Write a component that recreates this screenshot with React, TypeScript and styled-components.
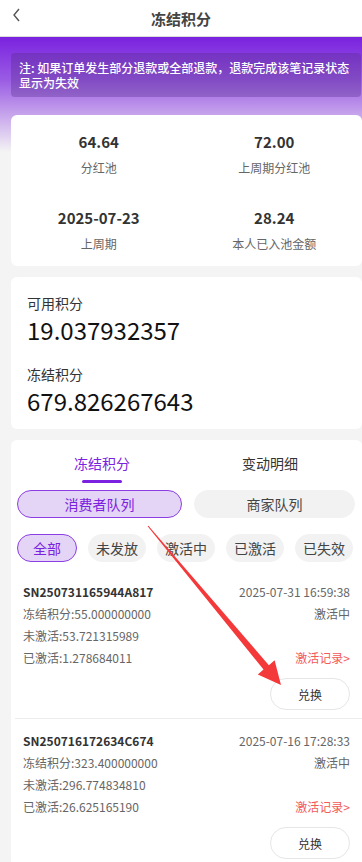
import React, { useState } from 'react'
import styled, { createGlobalStyle } from 'styled-components'

const GlobalStyle = createGlobalStyle`
  html, body {
    margin: 0;
    padding: 0;
    background: #f4f4f4;
    font-family: "Noto Sans CJK SC", "Noto Sans", sans-serif;
    -webkit-font-smoothing: antialiased;
  }
  * { box-sizing: border-box; }
`

const Page = styled.div`
  position: relative;
  width: 362px;
  min-height: 862px;
  overflow: hidden;
  background: linear-gradient(180deg, #7a22df 37px, #9a5ce4 80px, #c6a3ec 114px, #f4f4f4 152px) no-repeat,
    #f4f4f4;
`

const Header = styled.div`
  height: 37px;
  display: flex;
  align-items: center;
  justify-content: center;
  background: #fff;
  border-bottom: 1px solid #dcdcdc;
  position: relative;
`

const BackBtn = styled.div`
  position: absolute;
  left: 12px;
  top: 7px;
  width: 16px;
  height: 16px;
  display: flex;
  align-items: center;
`

const Title = styled.div`
  font-size: 15px;
  font-weight: 700;
  color: #444;
`

const Top = styled.div`
  padding: 16px 1px 0 11px;
`

const Notice = styled.div`
  background: rgba(80, 40, 130, 0.32);
  border-radius: 4px;
  padding: 7px 11px 7px 8px;
  color: #fff;
  font-size: 12px;
  line-height: 15px;
  font-weight: 500;
`

const Stack = styled.div`
  display: flex;
  flex-direction: column;
  gap: 11px;
  padding: 18px 0 0 11px;
`

const Card = styled.div`
  background: #fff;
  border-radius: 6px;
  width: 351px;
`

const StatsGrid = styled(Card)`
  display: grid;
  grid-template-columns: 1fr 1fr;
  row-gap: 30px;
  padding: 17px 0 12px;
`

const Stat = styled.div`
  display: flex;
  flex-direction: column;
  align-items: center;
  gap: 6px;
`

const StatValue = styled.div`
  font-size: 15px;
  line-height: 20px;
  font-weight: 700;
  color: #333;
`

const StatLabel = styled.div`
  font-size: 12px;
  line-height: 20px;
  color: #666;
`

const Balance = styled(Card)`
  padding: 16px 16px 12px;
`

const BalLabel = styled.div<{ $first?: boolean }>`
  font-size: 14px;
  line-height: 20px;
  color: #333;
  margin-top: ${({ $first }) => ($first ? '0' : '18px')};
`

const BalValue = styled.div`
  font-size: 24px;
  line-height: 32px;
  color: #111;
  margin-top: 1px;
`

const ListCard = styled(Card)`
  padding: 8px 0 0;
`

const Tabs = styled.div`
  display: grid;
  grid-template-columns: 1fr 1fr;
  height: 42px;
  padding: 0 8px 0 7px;
`

const Tab = styled.div<{ $active?: boolean }>`
  position: relative;
  text-align: center;
  font-size: 14px;
  line-height: 30px;
  color: ${({ $active }) => ($active ? '#7a22df' : '#333')};
  &::after {
    content: '';
    display: ${({ $active }) => ($active ? 'block' : 'none')};
    position: absolute;
    left: 50%;
    transform: translateX(-50%);
    top: 32px;
    width: 40px;
    height: 3px;
    border-radius: 2px;
    background: #7a22df;
  }
`

const QueueRow = styled.div`
  display: grid;
  grid-template-columns: 165px 161px;
  gap: 12px;
  padding: 0 7px 0 6px;
`

const Pill = styled.div<{ $active?: boolean }>`
  height: 28px;
  border-radius: 14px;
  display: flex;
  align-items: center;
  justify-content: center;
  font-size: 14px;
  color: ${({ $active }) => ($active ? '#7a22df' : '#444')};
  background: ${({ $active }) => ($active ? '#e4d5f6' : '#f2f2f2')};
  border: 1px solid ${({ $active }) => ($active ? '#8c3ee2' : '#f2f2f2')};
`

const Filters = styled.div`
  display: flex;
  gap: 11px;
  padding: 16px 0 8px 6px;
  overflow: hidden;
`

const Chip = styled(Pill)`
  flex: 0 0 auto;
  width: ${({ $active }) => ($active ? '60px' : '58px')};
`

const Item = styled.div<{ $last?: boolean }>`
  margin-left: 4px;
  padding: 10px 12px 8px 8px;
  border-bottom: ${({ $last }) => ($last ? 'none' : '1px solid #ececec')};
`

const Row = styled.div`
  display: flex;
  justify-content: space-between;
  align-items: center;
  height: 22px;
  font-size: 12px;
  color: #666;
`

const Sn = styled.span`
  font-weight: 700;
  color: #333;
`

const RecordLink = styled.span`
  color: #f25a5a;
`

const BtnRow = styled.div`
  display: flex;
  justify-content: flex-end;
  margin-top: 10px;
`

const ExchangeBtn = styled.button`
  width: 80px;
  height: 32px;
  border-radius: 16px;
  border: 1px solid #e6e6e6;
  background: #fff;
  font-family: inherit;
  font-size: 12px;
  color: #333;
`

const Arrow = styled.svg`
  position: absolute;
  left: 0;
  top: 0;
  pointer-events: none;
`

const stats = [
  { value: '64.64', label: '分红池' },
  { value: '72.00', label: '上周期分红池' },
  { value: '2025-07-23', label: '上周期' },
  { value: '28.24', label: '本人已入池金额' },
]

const records = [
  {
    sn: 'SN250731165944A817',
    time: '2025-07-31 16:59:38',
    frozen: '55.000000000',
    inactive: '53.721315989',
    active: '1.278684011',
  },
  {
    sn: 'SN250716172634C674',
    time: '2025-07-16 17:28:33',
    frozen: '323.400000000',
    inactive: '296.774834810',
    active: '26.625165190',
  },
]

const filters = ['全部', '未发放', '激活中', '已激活', '已失效']

export default function App() {
  const [tab, setTab] = useState(0)
  const [queue, setQueue] = useState(0)
  const [filter, setFilter] = useState(0)

  return (
    <Page>
      <GlobalStyle />
      <Header>
        <BackBtn>
          <svg width="10" height="16" viewBox="0 0 10 16">
            <path d="M7 2 L2 8 L7 14" fill="none" stroke="#555" strokeWidth="1.4" />
          </svg>
        </BackBtn>
        <Title>冻结积分</Title>
      </Header>
      <Top>
        <Notice>注: 如果订单发生部分退款或全部退款，退款完成该笔记录状态显示为失效</Notice>
      </Top>
      <Stack>
        <StatsGrid>
          {stats.map((s) => (
            <Stat key={s.label}>
              <StatValue>{s.value}</StatValue>
              <StatLabel>{s.label}</StatLabel>
            </Stat>
          ))}
        </StatsGrid>
        <Balance>
          <BalLabel $first>可用积分</BalLabel>
          <BalValue>19.037932357</BalValue>
          <BalLabel>冻结积分</BalLabel>
          <BalValue>679.826267643</BalValue>
        </Balance>
        <ListCard>
          <Tabs>
            {['冻结积分', '变动明细'].map((t, i) => (
              <Tab key={t} $active={tab === i} onClick={() => setTab(i)}>
                {t}
              </Tab>
            ))}
          </Tabs>
          <QueueRow>
            {['消费者队列', '商家队列'].map((q, i) => (
              <Pill key={q} $active={queue === i} onClick={() => setQueue(i)}>
                {q}
              </Pill>
            ))}
          </QueueRow>
          <Filters>
            {filters.map((f, i) => (
              <Chip key={f} $active={filter === i} onClick={() => setFilter(i)}>
                {f}
              </Chip>
            ))}
          </Filters>
          {records.map((r, i) => (
            <Item key={r.sn} $last={i === records.length - 1}>
              <Row>
                <Sn>{r.sn}</Sn>
                <span>{r.time}</span>
              </Row>
              <Row>
                <span>冻结积分:{r.frozen}</span>
                <span>激活中</span>
              </Row>
              <Row>
                <span>未激活:{r.inactive}</span>
              </Row>
              <Row>
                <span>已激活:{r.active}</span>
                <RecordLink>激活记录&gt;</RecordLink>
              </Row>
              <BtnRow>
                <ExchangeBtn>兑换</ExchangeBtn>
              </BtnRow>
            </Item>
          ))}
        </ListCard>
      </Stack>
      <Arrow width="362" height="862" viewBox="0 0 362 862">
        <polygon
          points="148.4,525.7 268.9,665.2 274.6,660.3 281,685 257.8,674.5 263.5,669.6 147.6,526.3"
          fill="#f4393b"
        />
      </Arrow>
    </Page>
  )
}
